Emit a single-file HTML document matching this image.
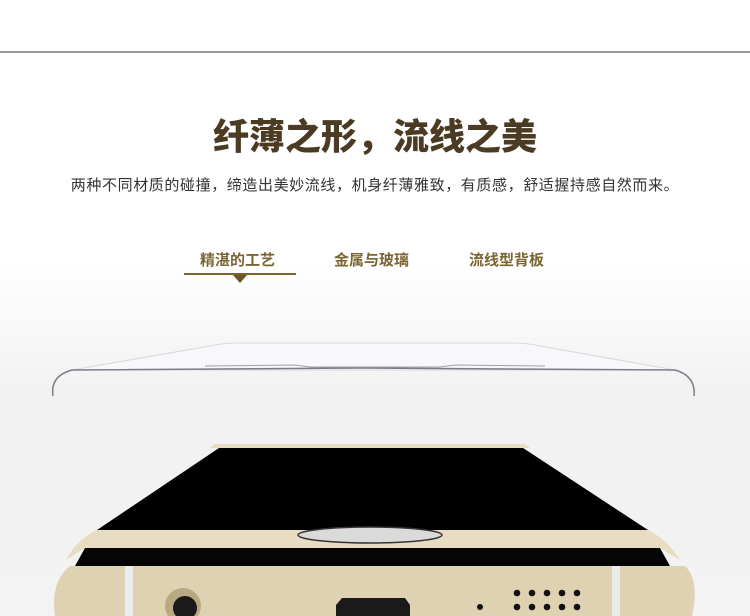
<!DOCTYPE html>
<html><head><meta charset="utf-8"><style>
body{margin:0;width:750px;height:616px;overflow:hidden;background:linear-gradient(#fff 0,#fff 260px,#f1f1f1 400px,#f3f3f3 616px);font-family:"Liberation Sans","Noto Sans CJK SC",sans-serif;position:relative}
.line{position:absolute;left:0;top:51px;width:750px;height:2px;background:#9a9a9a}
h1{position:absolute;top:108px;left:0;width:750px;text-align:center;margin:0;font-size:36px;font-weight:900;color:#4a3b22;letter-spacing:0px}
.sub{position:absolute;top:174px;left:0;width:750px;text-align:center;font-size:15px;color:#333;letter-spacing:0.6px}
.tab{position:absolute;top:249px;font-size:15px;font-weight:bold;color:#7a6532}
.ul{position:absolute;left:184px;top:273px;width:112px;height:2px;background:#7a6532}
.tri{position:absolute;left:233px;top:275px;border-left:7px solid transparent;border-right:7px solid transparent;border-top:8px solid #6b5628}
svg{position:absolute;left:0;top:0}
</style></head><body>
<div class="line"></div>
<h1>纤薄之形，流线之美</h1>
<div class="sub">两种不同材质的碰撞，缔造出美妙流线，机身纤薄雅致，有质感，舒适握持感自然而来。</div>
<div class="tab" style="left:200px">精湛的工艺</div>
<div class="tab" style="left:334px">金属与玻璃</div>
<div class="tab" style="left:469px">流线型背板</div>
<div class="ul"></div><div class="tri"></div>
<svg width="750" height="616">
<path d="M72 370 L210 346 Q222 343 240 343 L510 343 Q528 343 540 346 L675 370 Z" fill="#f8f8fa" stroke="#d8d8dc" stroke-width="1"/>
<path d="M53 396 Q50 376 72 370 L360 368 L675 370 Q696 376 694 396" fill="none" stroke="#7c7c88" stroke-width="1.5"/>
<path d="M205 366 L295 365 L310 367 L440 367 L455 365 L545 366" stroke="#a0a0a8" stroke-width="1" fill="none"/>
<path d="M222 446 L520 446 L648 530 L97 530 Z" fill="#000"/>
<path d="M215 444 L525 444 L530 448 L210 448 Z" fill="#e9dcc0"/>
<path d="M97 530 L648 530 Q668 540 680 560 L660 548 L85 548 L66 560 Q76 540 97 530Z" fill="#e8dcc2"/>
<path d="M85 548 L660 548 L670 566 L75 566Z" fill="#050505"/>
<path d="M70 566 L685 566 Q700 580 692 616 L55 616 Q50 582 70 566Z" fill="#dfd2b3"/>
<rect x="125" y="566" width="8" height="50" fill="#ececec"/>
<rect x="612" y="566" width="8" height="50" fill="#ececec"/>
<ellipse cx="370" cy="535" rx="72" ry="8" fill="#dadada" stroke="#333" stroke-width="1.5"/>
<circle cx="183" cy="606" r="18" fill="#b9a982"/><circle cx="185" cy="608" r="12" fill="#1a1a1a"/>
<path d="M342 598 L405 598 L410 605 L410 616 L336 616 L336 605Z" fill="#1a1a1a"/>
<g fill="#111"><circle cx="517" cy="593" r="3.3"/><circle cx="532" cy="593" r="3.3"/><circle cx="547" cy="593" r="3.3"/><circle cx="562" cy="593" r="3.3"/><circle cx="577" cy="593" r="3.3"/><circle cx="517" cy="607" r="3.3"/><circle cx="532" cy="607" r="3.3"/><circle cx="547" cy="607" r="3.3"/><circle cx="562" cy="607" r="3.3"/><circle cx="577" cy="607" r="3.3"/><circle cx="480" cy="607" r="3"/></g>
</svg>
</body></html>
